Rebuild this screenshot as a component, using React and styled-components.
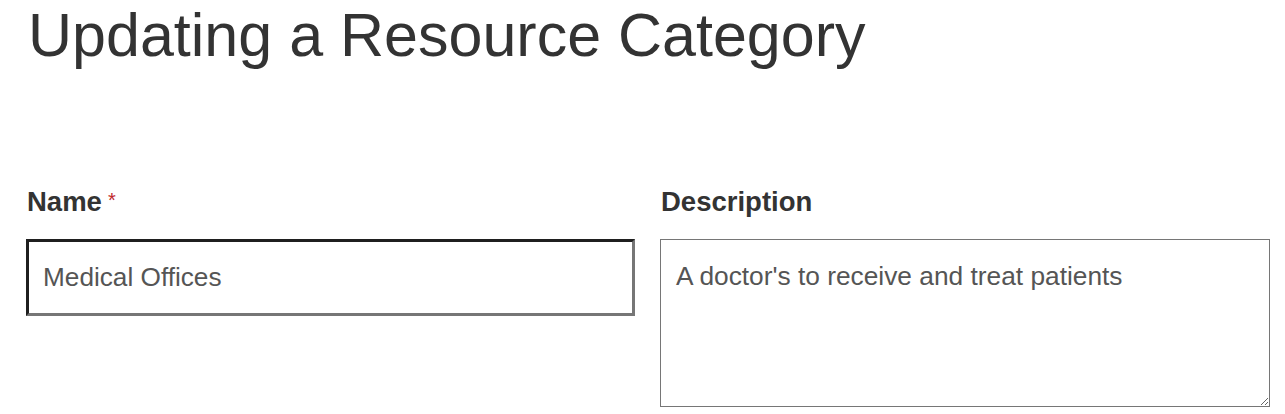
import styled, { createGlobalStyle } from "styled-components";

const GlobalStyle = createGlobalStyle`
body {
  margin: 0;
  background: #fff;
  font-family: "Liberation Sans", Arial, sans-serif;
}
`

const Page = styled.div`
padding: 0 15px 0 26px;
`
const Title = styled.h1`
margin: 3px 0 0 2px;
font-size: 61px;
line-height: 64px;
font-weight: 400;
color: #333;
`
const Form = styled.form`
margin-top: 119px;
display: grid;
grid-template-columns: 609px 610px;
column-gap: 25px;
align-items: start;
`
const Field = styled.div`
display: flex;
flex-direction: column;
gap: 21px;
`
const Label = styled.label`
display: flex;
align-items: flex-start;
gap: 6px;
font-size: 27.5px;
line-height: 32px;
font-weight: 700;
color: #333;
padding-left: 1px;
`
const Required = styled.span`
color: #c0282d;
font-size: 20px;
line-height: 28px;
font-weight: 400;
`
const TextInput = styled.input`
box-sizing: border-box;
width: 100%;
height: 77px;
padding: 0 14px;
border: 3px solid;
border-color: #1f1f1f #767676 #767676 #1f1f1f;
font-family: "Liberation Sans", Arial, sans-serif;
font-size: 26.2px;
color: #555;
outline: none;
`
const TextArea = styled.textarea`
box-sizing: border-box;
width: 100%;
height: 168px;
padding: 21px 15px;
border: 1px solid #767676;
font-family: "Liberation Sans", Arial, sans-serif;
font-size: 26.3px;
color: #555;
outline: none;
`

const App = () => {
    return <>
    <GlobalStyle />
    <Page>
        <Title>Updating a Resource Category</Title>
        <Form>
            <Field>
                <Label htmlFor="name">
                    Name <Required>*</Required>
                </Label>
                <TextInput id="name" defaultValue="Medical Offices" />
            </Field>
            <Field>
                <Label htmlFor="description">Description</Label>
                <TextArea id="description" defaultValue="A doctor's to receive and treat patients" />
            </Field>
        </Form>
    </Page>
    </>
}

export default App;
